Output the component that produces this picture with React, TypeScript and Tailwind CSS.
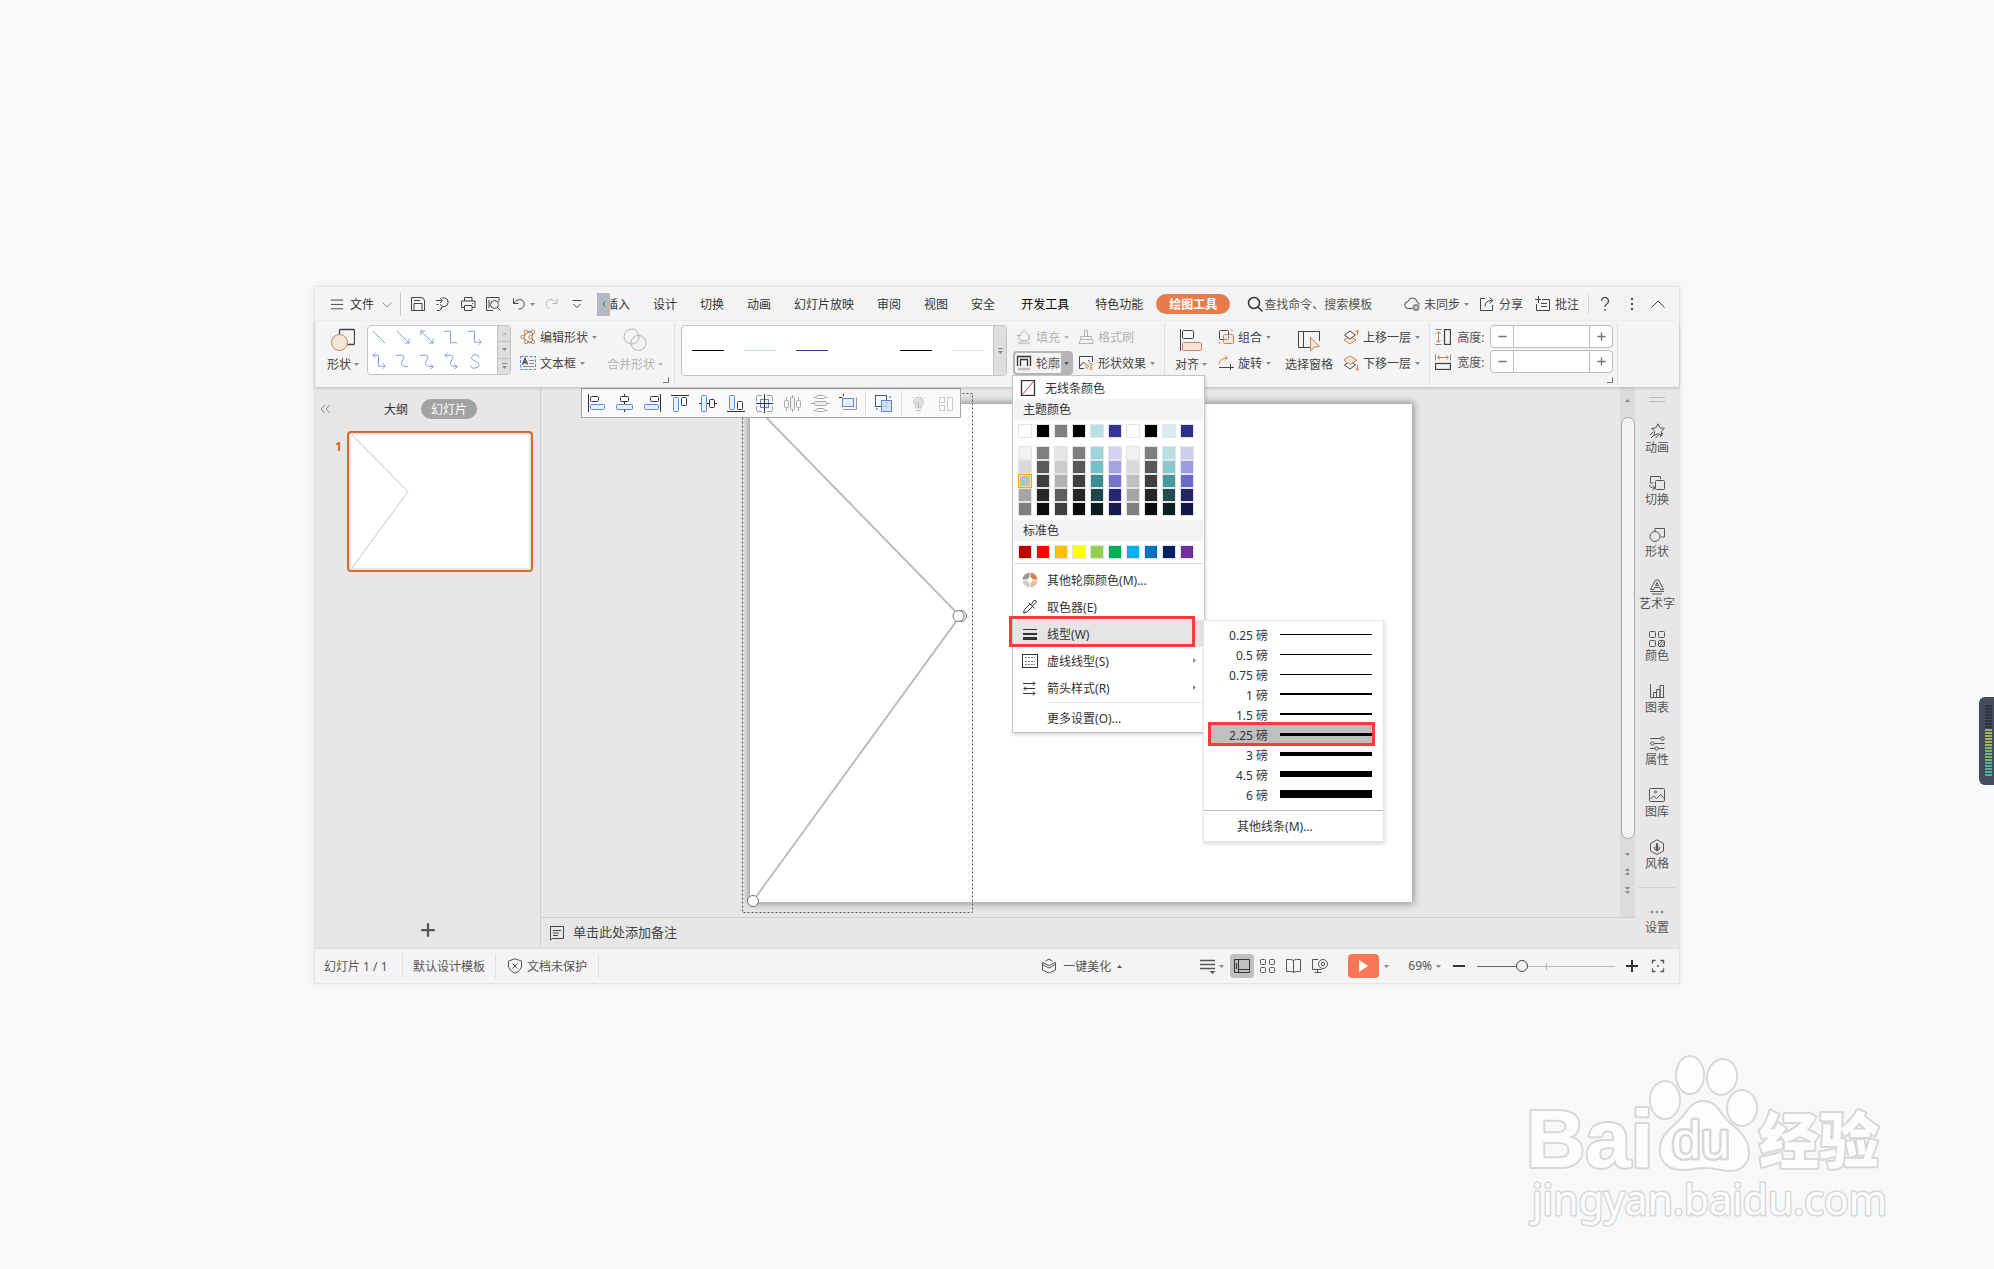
import React, { useState } from 'react';

const ORANGE = '#d08350';
const BLUE = '#5c8ad8';

// 16x16 line icons, drawn with the current text colour
const glyphs: Record<string, React.ReactNode> = {
  menu: <path d="M1 3.500h14M1 8.500h14M1 13.500h14" />,
  chevronDown: <path d="M3.500 6.500 8 11l4.500-4.500" />,
  chevronUp: <path d="M1.500 11.500 8 5l6.500 6.500" />,
  save: (
    <>
      <path d="M1.500 14.500v-13h9.500q3.500 0 3.500 3.500v9.500z" />
      <path d="M4 14.500V7.500h8v7M4 4.500h6" />
    </>
  ),
  output: (
    <>
      <path d="M3.500 8.500H1.500M1 4.500h5.500M5 2l2.500 2.500L5 7" />
      <path d="M7.500 10.500h2a4.300 4.300 0 0 0 0-8.500H7M9.500 10.500H8Q6.500 10.500 6.500 12t-2 2.500H2M5 8.500 7.500 10.500 5.500 12.500" />
    </>
  ),
  print: (
    <>
      <path d="M4.500 5V1.500h7.500V5M4 11.500H1.500v-6.500h13.500v6.500H12" />
      <path d="M4.500 9.500h7.500v5H4.500zM12 7.500h1" />
    </>
  ),
  preview: (
    <>
      <path d="M8 14.500H1.500v-13h12.500v4M4 4v8" />
      <circle cx="9.500" cy="8.500" r="4" fill="#f4f4f4" />
      <path d="m12.500 11.500 3 3" />
    </>
  ),
  undo: <path d="M3.500 2.500v5h5M3.500 7.500Q6 3.500 9.500 3.500a4.500 4.500 0 0 1 0 9.500H8.500" />,
  redo: <path d="M13 2.500v5H8M13 7.500Q10 3.500 7 3.500a4.500 4.500 0 0 0-1 9" />,
  more: <path d="M3.500 4.500h9M4.500 8l3.500 3.500L11.500 8" />,
  search: (
    <>
      <circle cx="7" cy="7" r="5.500" strokeWidth="1.500" />
      <path d="m11 11 4.500 4.500" strokeWidth="1.500" />
    </>
  ),
  cloud: (
    <>
      <path d="M8.500 12.500H4.500a3.500 3.500 0 0 1-.5-7Q5 2 8.500 2q4 0 4.500 4 2 .5 2.500 2.500" />
      <circle cx="12" cy="11.500" r="3.500" fill="#8b8b8b" stroke="none" />
      <path d="m10.700 10.200 2.600 2.600m0-2.600-2.600 2.600" stroke="#fff" />
    </>
  ),
  share: <path d="M6 2.500H1.500v12h12V9M6 10.500Q6 4.500 13 4.500M10.500 1.500l3.500 3-3.500 3" />,
  comment: <path d="M7 3.500h7.500v11h-13V8M0 3.500h6M3.500 0v7M6 7.500h6M6 10.500h6" />,
  help: (
    <>
      <path d="M4.500 5a3.500 3.500 0 1 1 5.500 2.800Q8 9 8 11" strokeWidth="1.300" />
      <path d="M8 13v1.500" strokeWidth="1.500" />
    </>
  ),
  dots: <path d="M8 2v2M8 7v2M8 12v2" strokeWidth="2" />,
  editShape: (
    <>
      <path d="m3 8 4-5h7l-3 5 3 5H7z" />
      <g fill="#f3f3f3" stroke={ORANGE}>
        <circle cx="6" cy="3" r="1.700" />
        <circle cx="13" cy="3" r="1.700" />
        <circle cx="2.500" cy="8" r="1.700" />
        <circle cx="10.500" cy="8" r="1.700" />
        <circle cx="6" cy="13" r="1.700" />
        <circle cx="13" cy="13" r="1.700" />
      </g>
    </>
  ),
  textBox: (
    <>
      <rect x=".5" y="1.500" width="15" height="13" stroke={BLUE} strokeDasharray="3 1.500" />
      <path d="m2.500 9.500 2.500-6 2.500 6M3.500 7.500h3" strokeWidth="1.300" />
      <path d="M9 5.500h5M9 8.500h5M3 11.500h11" stroke="#888" />
    </>
  ),
  fill: (
    <>
      <path d="M3 6.500 8 1.500l5 5v3l-1.500 2h-7L3 9zM1 6.500h4M13 6v5" />
      <path d="M2 14h12" strokeWidth="2.500" stroke="#d0d0d0" />
    </>
  ),
  brush: <path d="M6.500 7V1.500h3V7M2.500 7.500h11v3h-11zM2.500 10.500 1 14.500h14V10.500" />,
  outline: (
    <>
      <path d="M1.500 11V1.500h13V11M4.500 11V4.500h7V11" strokeWidth="1.300" stroke="#333" />
      <path d="M2 14h12" strokeWidth="2.500" stroke="#bfbfbf" />
    </>
  ),
  effects: (
    <>
      <path d="M6 13.500H1.500v-12h13V7M2 11l3.500-4L8 9.500M10 5.500l2 1" />
      <path d="m9 9.500 1.500 2L9 13.500l-1.500-2zM13 8l1.300 1.500L13 11l-1.300-1.500zM13 12l1.300 1.500L13 15l-1.300-1.500z" stroke={ORANGE} />
    </>
  ),
  group: (
    <>
      <rect x="1.500" y="1.500" width="9" height="9" rx="1" />
      <path d="M1.500 13v2M13 1.500h2" stroke={ORANGE} />
      <rect x="5.500" y="5.500" width="10" height="9" rx="1" stroke={ORANGE} fill="#f3d9cb" fillOpacity=".5" />
    </>
  ),
  rotate: (
    <>
      <path d="M1 12.500h9M12.500 9v6M10 12.500h6" />
      <path d="M1 9q1-6 8-6M7 .5 9.500 3 7 5.500" stroke={ORANGE} />
    </>
  ),
  layerUp: (
    <>
      <path d="m1 11 6-3.500 6 3.500-6 4z" stroke={ORANGE} fill="#fbe6da" />
      <path d="m1.500 6 5.500-4 5.500 4L7 10z" fill="#f3f3f3" />
      <path d="M14.500 6V1M12.500 3l2-2 1.500 2" stroke={ORANGE} />
    </>
  ),
  layerDown: (
    <>
      <path d="m1.500 10 5.500-4 5.500 4L7 14z" />
      <path d="m1 5 6-4 7 4-7 4.500z" stroke={ORANGE} fill="#fbe6da" />
      <path d="M14.500 10v5.500M12.500 13.500l2 2 1.500-2" stroke={ORANGE} />
    </>
  ),
  height: (
    <>
      <rect x="9.500" y=".5" width="6" height="15" strokeWidth="1.300" />
      <path d="M.5.500h6M.5 15.500h6" stroke="#888" />
      <path d="M3.500 3v10M1.500 5l2-2.500 2 2.500M1.500 11l2 2.500 2-2.500" stroke={ORANGE} />
    </>
  ),
  width: (
    <>
      <rect x=".5" y="9.500" width="15" height="6" strokeWidth="1.300" />
      <path d="M.5.500v6M15.500.500v6" stroke="#888" />
      <path d="M3 3.500h10M5 1.500 2.500 3.500 5 5.500M11 1.500l2.500 2L11 5.500" stroke={ORANGE} />
    </>
  ),
  noLine: (
    <>
      <rect x="1.500" y=".5" width="13" height="15" strokeWidth="1.300" />
      <path d="m2.500 14.500 11-13" stroke="#e03030" />
    </>
  ),
  wheel: (
    <g stroke="none">
      <path d="M8.500.500a7.500 7.500 0 0 1 7 7H11L8.500 5z" fill={ORANGE} />
      <path d="M15.500 8.500a7.500 7.500 0 0 1-7 7V11L11 8.500z" fill="#e6bb9f" />
      <path d="M7.500 15.500a7.500 7.500 0 0 1-7-7H5L7.500 11z" fill="#cfcfcf" />
      <path d="M.5 7.500a7.500 7.500 0 0 1 7-7V5L5 7.500z" fill="#999" />
    </g>
  ),
  dropper: <path d="M8 5 2.500 10.500 1.500 14l3.500-1L10.500 7.500M6.500 3.500l6 6M9 5.500l3-4q2-1 2.500 1.500l-4 4" />,
  weight: (
    <>
      <path d="M1 3.500h14" />
      <path d="M1 8h14" strokeWidth="2" />
      <path d="M1 12.500h14" strokeWidth="3" />
    </>
  ),
  dash: (
    <>
      <rect x=".5" y="1.500" width="15" height="13" />
      <path d="M3 4.500h10M3 8.500h10M3 11.500h10" strokeDasharray="2 1" stroke="#777" />
    </>
  ),
  arrows: <path d="M1 3.500h12M11 1.500l2 2-2 2M13 8.500H2M4 6.500l-2 2 2 2M1 13.500h12M11 11.500l2 2-2 2" />,
  anim: (
    <>
      <path d="m9 .8 2 4 4.300.6-3 3 .7 4.300L9 10.700 5 12.600l.7-4.200-3-3 4.300-.6z" />
      <path d="m4 9-3 3M5 12l-3 3M10 11.500 6.500 15M14 10l-3 4" />
    </>
  ),
  swap: (
    <>
      <path d="M4.500 8H1.500V1.500h10V4" />
      <rect x="6.500" y="5.500" width="9" height="9" rx="1" />
      <path d="M.5 10q0 3 5 3M4 10.500 6 13l-2.500 2" />
    </>
  ),
  shape: (
    <>
      <path d="M6 4V1.500h9.500v8.500H12" />
      <circle cx="6" cy="9.500" r="5" />
    </>
  ),
  wordArt: (
    <>
      <path d="M1.500 10.500 6.500 1h3l5 9.500h-3l-1-2h-5l-1 2zM6.500 6.500 8 3.500l1.500 3z" />
      <path d="M1 12.500h14M3 15h10" />
    </>
  ),
  palette: (
    <>
      <rect x=".5" y=".5" width="6" height="6" rx="1" />
      <rect x="9.500" y=".5" width="6" height="6" rx="1" />
      <rect x=".5" y="9.500" width="6" height="6" rx="1" />
      <rect x="9.500" y="9.500" width="6" height="6" rx="1" />
      <path d="m10 13 3.500-3.500M10.500 15.500 15.500 10M13 15.500l2.500-2.500" />
    </>
  ),
  chart: <path d="M1.500 1v13.500H15.500M4.500 14V9.500h3V14M7.500 14V6.500h3.500V14M11 14V2.500h3.500V14" />,
  sliders: (
    <>
      <path d="M1 3.500h11M5 8.500h10.500M1 8.500h1M1 13.500h5M9 13.500h6.500" />
      <circle cx="13.500" cy="3.500" r="1.700" />
      <circle cx="3.500" cy="8.500" r="1.700" />
      <circle cx="7.500" cy="13.500" r="1.700" />
    </>
  ),
  image: (
    <>
      <rect x=".5" y="1.500" width="15" height="13" rx="1" />
      <circle cx="6.500" cy="5" r="1" />
      <path d="m1.500 12 3-3 3 2.500 4-4 3.500 4" />
    </>
  ),
  style: (
    <>
      <path d="M8 .8 14.500 4.500v7.500L8 15.500 1.500 12V4.500z" />
      <path d="M8 4q2 3.500 0 7.500-2-4 0-7.500zM5 8q.5 3 3 4M11 8q-.5 3-3 4" fill="currentColor" />
    </>
  ),
  note: <path d="M1.500 15V1.500h13v12H3.500zM4 5.500h8M4 8h6M4 10.500h5" />,
  shield: <path d="M8 .8 14.500 3v6q-1 4-6.500 6.300Q2.500 13 1.500 9V3zM5.500 5.500l5 5m0-5-5 5" />,
  beautify: <path d="M8 7.500 1.500 4.500v7.500L8 15l6.500-3V4.500zM4.500 3 8 1l3.500 2M1.500 6.500 8 10l6.500-3.500" />,
  lines: (
    <>
      <path d="M0 2.500h15M0 6.500h15M0 10.500h15" strokeWidth="1.300" />
      <path d="M9.500 13h6l-3 3z" fill="currentColor" stroke="none" />
    </>
  ),
  normal: <path d="M.5 1.500h15v13H.5zM4.500 1.500v13M4.500 11.500h11M2.500 5v6" />,
  sorter: (
    <>
      <rect x=".5" y="1.500" width="5" height="5" rx="1" />
      <rect x="9.500" y="1.500" width="5" height="5" rx="1" />
      <rect x=".5" y="9.500" width="5" height="5" rx="1" />
      <rect x="9.500" y="9.500" width="5" height="5" rx="1" />
    </>
  ),
  book: <path d="M7.500 2.500v12M7.500 2.500Q6 1.500 4.500 1.500h-4v12h4q2 0 3 1 1-1 3-1h4v-12h-4q-2 0-3 1" />,
  projector: (
    <>
      <path d="M6 1.500H.5v10h9M5.500 11.500v3M2.500 14.500h7" />
      <circle cx="11" cy="6" r="4.500" />
      <circle cx="11" cy="6" r="1.700" />
    </>
  ),
  fit: (
    <>
      <path d="M2.500 5.500v-3h3M10.500 2.500h3v3M13.500 10.500v3h-3M5.500 13.500h-3v-3" strokeWidth="1.300" />
      <circle cx="8" cy="8" r="1" fill="currentColor" stroke="none" />
    </>
  ),
  plus: <path d="M2 8h12M8 2v12" strokeWidth="2" />,
  minus: <path d="M2 8h12" strokeWidth="2" />,
  collapse: <path d="M7 4 3 8l4 4M12 4 8 8l4 4" />,
};

function Icon({ name, className = 'size-4' }: { name: string; className?: string }) {
  return (
    <svg viewBox="0 0 16 16" fill="none" stroke="currentColor" className={`shrink-0 ${className}`} aria-hidden="true">
      {glyphs[name]}
    </svg>
  );
}

function Caret({ up = false, className = 'text-[#888]' }: { up?: boolean; className?: string }) {
  return (
    <svg viewBox="0 0 5 3" className={`h-[3px] w-[5px] shrink-0 ${className}`} aria-hidden="true">
      <path d={up ? 'M0 3h5L2.500 0z' : 'M0 0h5L2.500 3z'} fill="currentColor" />
    </svg>
  );
}

// CJK glyphs sit high in the line box, the padding centres them on the icons
const Label = ({ children }: { children: React.ReactNode }) => <span className="whitespace-nowrap pt-[2px]">{children}</span>;

function Tool({ icon, label, caret = true, muted = false }: { icon: string; label: string; caret?: boolean; muted?: boolean }) {
  return (
    <button disabled={muted} className={`flex h-6 items-center gap-1 ${muted ? 'text-[#b4b4b4]' : 'text-[#444]'}`}>
      <Icon name={icon} />
      <Label>{label}</Label>
      {caret && <Caret className={muted ? 'text-[#b4b4b4]' : 'text-[#888]'} />}
    </button>
  );
}

function BigTool({ label, caret = true, muted = false, children }: { label: string; caret?: boolean; muted?: boolean; children: React.ReactNode }) {
  return (
    <button disabled={muted} className={`flex h-[50px] shrink-0 flex-col items-center gap-[3px] pt-[3px] ${muted ? 'text-[#b4b4b4]' : 'text-[#444]'}`}>
      <svg viewBox="0 0 24 24" fill="none" stroke="currentColor" className="size-6" aria-hidden="true">
        {children}
      </svg>
      <span className="flex items-center gap-[3px]">
        <Label>{label}</Label>
        {caret && <Caret className={muted ? 'text-[#b4b4b4]' : 'text-[#888]'} />}
      </span>
    </button>
  );
}

const Divider = () => <span className="my-[2px] w-px shrink-0 self-stretch bg-[#dfdfdf]" />;

const Launcher = () => (
  <svg viewBox="0 0 6 6" className="mt-[2px] size-[6px] self-end" aria-hidden="true">
    <path d="M5.500 0v5.500H0" fill="none" stroke="#777" />
  </svg>
);

const lineShapes = [
  'M1 1 15 15',
  'M1 1 15 15M15 10v5h-5',
  'M1 1 15 15M15 10v5h-5M1 6V1h5',
  'M0 1.500h7.500v13H15',
  'M0 1.500h7.500v12.500H15M12 10.500l3 3.500-3 3',
  'M1 1.500h6.500v12.500H15M12 10.500l3 3.500-3 3M4-1.500l-3 3 3 3',
  'M0 1.500h6q5 0 2 5t-1 6q1 2 7 2',
  'M0 1.500h6q5 0 2 5t-1 6q1 2 8 2M12 11.500l3 3-3 3',
  'M1 1.500h6q5 0 2 5t-1 6q1 2 7 2M12 11.500l3 3-3 3M4-1.500l-3 3 3 3',
  'M13 4Q12 .5 8.500.500T4 4q0 3 4 4t4.500 4-4 4T3 13',
];

const themeTop = ['#ffffff', '#000000', '#808080', '#000000', '#b9e1e3', '#333399', '#ffffff', '#000000', '#d9edee', '#2d2d8a'];

const themeShades = [
  ['#f2f2f2', '#7f7f7f', '#e5e5e5', '#7f7f7f', '#9fd5d8', '#d1d1f0', '#f2f2f2', '#7f7f7f', '#b9dfe0', '#cdcdee'],
  ['#d9d9d9', '#595959', '#cccccc', '#595959', '#74c1c6', '#a3a3e0', '#d9d9d9', '#595959', '#8bc8cb', '#9b9bdd'],
  ['#bfbfbf', '#3f3f3f', '#b2b2b2', '#3f3f3f', '#3d8c91', '#7575d1', '#bfbfbf', '#3f3f3f', '#47999d', '#6a6acc'],
  ['#a6a6a6', '#262626', '#5f5f5f', '#262626', '#1e4648', '#262673', '#a6a6a6', '#262626', '#244d4f', '#222267'],
  ['#7f7f7f', '#0c0c0c', '#3f3f3f', '#0c0c0c', '#0c1c1d', '#19194c', '#7f7f7f', '#0c0c0c', '#0e1f20', '#161645'],
];

const standardColors = ['#c00000', '#ff0000', '#ffc000', '#ffff00', '#92d050', '#00b050', '#00b0f0', '#0070c0', '#002060', '#7030a0'];

const weights = [
  { label: '0.25 磅', size: 1 },
  { label: '0.5 磅', size: 1 },
  { label: '0.75 磅', size: 1 },
  { label: '1 磅', size: 2 },
  { label: '1.5 磅', size: 2 },
  { label: '2.25 磅', size: 3 },
  { label: '3 磅', size: 4 },
  { label: '4.5 磅', size: 6 },
  { label: '6 磅', size: 8 },
];

function Swatches({ colors, picked = false }: { colors: string[]; picked?: boolean }) {
  return (
    <div className="flex gap-1 pl-[5px]">
      {colors.map((c, i) => (
        <button
          key={i}
          aria-label={c}
          className={`size-[14px] border ${picked && i === 0 ? 'border-[#ffa500] outline outline-1 -outline-offset-2 outline-[#ffe3a0]' : 'border-[#e2e4e9]'}`}
          style={{ backgroundColor: c }}
        />
      ))}
    </div>
  );
}

function MenuItem({ icon, label, arrow = false }: { icon: string; label: string; arrow?: boolean }) {
  return (
    <button className="flex h-[27px] w-full items-center gap-[9px] pl-[9px] pr-2 text-left">
      <Icon name={icon} />
      <Label>{label}</Label>
      {arrow && (
        <svg viewBox="0 0 3 5" className="ml-auto h-[5px] w-[3px]" aria-hidden="true">
          <path d="M0 0v5l3-2.500z" fill="#888" />
        </svg>
      )}
    </button>
  );
}

function WeightMenu() {
  const [current, setCurrent] = useState('2.25 磅');
  return (
    <div className="absolute left-[190px] top-0 w-[181px] border border-[#e6e6e6] bg-white pt-[3px] shadow-[1px_2px_4px_rgba(0,0,0,0.15)]">
      {weights.map((w) => (
        <button key={w.label} onClick={() => setCurrent(w.label)} className="relative flex h-5 w-full items-center">
          {current === w.label && (
            <span className="absolute -top-[2px] left-1 h-6 w-[167px] border-[3px] border-[#ff3a3a] bg-[#bfbfbf]" />
          )}
          <span className="relative w-16 pt-[3px] text-right">{w.label}</span>
          <span className="relative ml-3 w-[92px] bg-black" style={{ height: w.size }} />
        </button>
      ))}
      <div className="mt-[6px] border-t border-[#bdbdbd]">
        <button className="h-[30px] pl-[33px] pt-[2px]">其他线条(M)...</button>
      </div>
    </div>
  );
}

function OutlineMenu() {
  return (
    <div className="absolute -left-px top-6 z-20 w-[193px] border border-[#c6c6c6] bg-white text-[#333] shadow-[1px_2px_3px_rgba(0,0,0,0.15)]">
      <button className="flex h-[23px] items-center gap-[9px] pl-[7px] pt-px">
        <Icon name="noLine" />
        <Label>无线条颜色</Label>
      </button>
      <div className="mx-px h-[21px] bg-[#f3f3f3] pl-[9px] pt-[3px]">主题颜色</div>
      <div className="pt-1">
        <Swatches colors={themeTop} />
      </div>
      <div className="pb-1 pt-2">
        {themeShades.map((row, i) => (
          <Swatches key={i} colors={row} picked={i === 2} />
        ))}
      </div>
      <div className="mx-px h-[21px] bg-[#f3f3f3] pl-[9px] pt-[3px]">标准色</div>
      <div className="py-1">
        <Swatches colors={standardColors} />
      </div>
      <div className="mx-px border-t border-[#dcdcdc] pt-[2px]" />
      <MenuItem icon="wheel" label="其他轮廓颜色(M)..." />
      <MenuItem icon="dropper" label="取色器(E)" />
      <div className="relative bg-[#e5e5e5]">
        <MenuItem icon="weight" label="线型(W)" />
        <WeightMenu />
        <span className="pointer-events-none absolute -left-1 -top-1 h-[31px] w-[186px] border-[3px] border-[#ff3a3a]" />
      </div>
      <MenuItem icon="dash" label="虚线线型(S)" arrow />
      <MenuItem icon="arrows" label="箭头样式(R)" arrow />
      <div className="ml-[34px] mt-px border-t border-[#e6e6e6]" />
      <button className="h-[29px] pl-[34px] pt-[2px]">更多设置(O)...</button>
    </div>
  );
}

function TitleBar() {
  return (
    <header className="flex h-[34px] items-center pl-[15px] pr-[13px] text-[#333]">
      <button className="flex shrink-0 items-center">
        <Icon name="menu" className="size-[14px]" />
        <span className="ml-[6px] pt-[2px]">文件</span>
        <Icon name="chevronDown" className="ml-[5px] size-4 text-[#888]" />
      </button>
      <span className="ml-[5px] h-6 w-px bg-[#c8c8c8]" />
      <div className="ml-[9px] flex items-center gap-[9px] text-[#444]">
        {['save', 'output', 'print', 'preview'].map((n) => (
          <button key={n} aria-label={n}>
            <Icon name={n} />
          </button>
        ))}
        <button aria-label="undo" className="flex items-center gap-1">
          <Icon name="undo" />
          <Caret />
        </button>
        <button aria-label="redo" className="text-[#bbb]">
          <Icon name="redo" />
        </button>
        <button aria-label="more">
          <Icon name="more" />
        </button>
      </div>
      <button aria-label="scroll tabs" className="ml-3 flex h-[23px] w-[13px] items-center justify-center bg-[#b6b9c2]">
        <svg viewBox="0 0 4 6" className="h-[6px] w-1" aria-hidden="true">
          <path d="M3.500.500 1 3l2.500 2.500" fill="none" stroke="#555" />
        </svg>
      </button>
      <nav className="flex shrink-0 items-center gap-[23px] pt-[2px]">
        <button className="flex w-5 justify-end overflow-hidden whitespace-nowrap">插入</button>
        {['设计', '切换', '动画', '幻灯片放映', '审阅', '视图', '安全'].map((t) => (
          <button key={t}>{t}</button>
        ))}
      </nav>
      <nav className="ml-[26px] flex shrink-0 items-center">
        <button className="pt-[2px] text-black">开发工具</button>
        <button className="ml-[26px] pt-[2px]">特色功能</button>
        <button className="ml-[13px] h-5 rounded-full bg-[#e87b4b] px-[13px] pt-px font-bold text-white">绘图工具</button>
      </nav>
      <label className="ml-[17px] flex min-w-0 items-center gap-px">
        <Icon name="search" />
        <input aria-label="搜索" placeholder="查找命令、搜索模板" className="w-[112px] bg-transparent pt-[2px] outline-none placeholder:text-[#555]" />
      </label>
      <div className="ml-auto flex shrink-0 items-center text-[#444]">
        <button className="flex items-center gap-1">
          <Icon name="cloud" />
          <Label>未同步</Label>
          <Caret />
        </button>
        <button className="ml-[10px] flex items-center gap-1">
          <Icon name="share" />
          <Label>分享</Label>
        </button>
        <button className="ml-3 flex items-center gap-1">
          <Icon name="comment" />
          <Label>批注</Label>
        </button>
        <span className="ml-[9px] h-5 w-px bg-[#d8d8d8]" />
        <button aria-label="help" className="ml-2">
          <Icon name="help" />
        </button>
        <button aria-label="options" className="ml-[11px]">
          <Icon name="dots" />
        </button>
        <button aria-label="collapse" className="ml-[10px]">
          <Icon name="chevronUp" />
        </button>
      </div>
    </header>
  );
}

function Stepper({ id, icon, label }: { id: string; icon: string; label: string }) {
  return (
    <div className="flex items-center">
      <Icon name={icon} />
      <label htmlFor={id} className="ml-[6px] w-[33px] pt-[2px] text-[#555]">
        {label}
      </label>
      <div className="flex h-[23px] w-[123px] overflow-hidden rounded border border-[#bdbdbd] bg-white text-[#777]">
        <button aria-label="minus" className="flex w-[22px] items-center justify-center">
          <Icon name="minus" className="size-[11px]" />
        </button>
        <input id={id} className="w-0 flex-1 border-x border-[#bdbdbd] outline-none" />
        <button aria-label="plus" className="flex w-[22px] items-center justify-center">
          <Icon name="plus" className="size-[11px]" />
        </button>
      </div>
    </div>
  );
}

function Ribbon() {
  return (
    <div className="relative z-10 flex h-[66px] items-start pl-3 shadow-[0_1px_3px_rgba(0,0,0,0.2)]">
      <div className="mt-1 flex flex-col pr-[5px]">
        <div className="flex pr-[6px]">
          <BigTool label="形状">
            <rect x="8.500" y="1.500" width="15" height="15" rx="1" strokeWidth="1.300" />
            <circle cx="8.500" cy="14.500" r="8" stroke={ORANGE} fill="#f5e4da" />
          </BigTool>
          <div className="ml-2 flex h-[50px] w-36 overflow-hidden rounded border border-[#c4c4c4] bg-white">
            <div className="grid flex-1 grid-cols-[repeat(5,14px)] content-start gap-[10px] p-1">
              {lineShapes.map((d) => (
                <button key={d} aria-label="line">
                  <svg viewBox="0 0 16 16" fill="none" stroke="#6f94d6" className="size-[14px] overflow-visible" aria-hidden="true">
                    <path d={d} />
                  </svg>
                </button>
              ))}
            </div>
            <div className="flex w-[13px] flex-col divide-y divide-[#c4c4c4] border-l border-[#c4c4c4] bg-[#dedede]">
              <button aria-label="up" className="flex flex-1 items-center justify-center">
                <Caret up className="text-[#bbb]" />
              </button>
              <button aria-label="down" className="flex flex-1 items-center justify-center">
                <Caret />
              </button>
              <button aria-label="expand" className="flex flex-1 flex-col items-center justify-center gap-[2px]">
                <span className="h-px w-[5px] bg-[#888]" />
                <Caret />
              </button>
            </div>
          </div>
          <div className="ml-[9px] flex flex-col gap-[2px]">
            <Tool icon="editShape" label="编辑形状" />
            <Tool icon="textBox" label="文本框" />
          </div>
          <div className="ml-[10px]">
            <BigTool label="合并形状" muted>
              <circle cx="8.500" cy="8.500" r="7.500" />
              <circle cx="15.500" cy="15" r="7.500" />
            </BigTool>
          </div>
        </div>
        <Launcher />
      </div>
      <Divider />
      <div className="ml-[6px] mt-1 flex h-[51px] w-[326px] overflow-hidden rounded border border-[#c4c4c4] bg-white">
        <div className="flex flex-1 items-center gap-5 pl-[10px]">
          {['#000000', '#b9dfe0', '#333399', '#ffffff', '#000000', '#dbebe9'].map((c, i) => (
            <button key={i} aria-label="preset" className="h-px w-8" style={{ backgroundColor: c }} />
          ))}
        </div>
        <button aria-label="expand" className="flex w-[13px] flex-col items-center justify-center gap-[2px] border-l border-[#c4c4c4] bg-[#dedede]">
          <span className="h-px w-[5px] bg-[#888]" />
          <Caret />
        </button>
      </div>
      <div className="ml-[6px] mt-1 flex flex-col gap-[2px]">
        <div className="pl-[3px]">
          <Tool icon="fill" label="填充" muted />
        </div>
        <div className="relative">
          <button className="flex h-6 w-[60px] items-center rounded border-2 border-[#b5b5b5] pl-px text-[#555]">
            <Icon name="outline" />
            <span className="ml-1 pt-[2px]">轮廓</span>
            <span className="ml-px flex h-full flex-1 items-center justify-center bg-[#b5b5b5]">
              <Caret className="text-[#555]" />
            </span>
          </button>
          <OutlineMenu />
        </div>
      </div>
      <div className="ml-[5px] mr-[9px] mt-1 flex flex-col gap-[2px]">
        <Tool icon="brush" label="格式刷" caret={false} muted />
        <Tool icon="effects" label="形状效果" />
      </div>
      <Divider />
      <div className="ml-[10px] mr-[9px] mt-1 flex">
        <BigTool label="对齐">
          <path d="M1.500 1v22" />
          <rect x="3.500" y="2.500" width="11" height="8" rx="1" />
          <rect x="3.500" y="14.500" width="19" height="8" rx="1" stroke={ORANGE} fill="#f5e4da" />
        </BigTool>
        <div className="ml-[11px] flex flex-col gap-[2px]">
          <Tool icon="group" label="组合" />
          <Tool icon="rotate" label="旋转" />
        </div>
        <div className="ml-[14px]">
          <BigTool label="选择窗格" caret={false}>
            <path d="M13 19.500H1.500v-16h21V13M6.500 3.500v16" />
            <path d="m13.500 9.500 9 9-5 .5-4 4z" stroke={ORANGE} fill="#f5e4da" />
          </BigTool>
        </div>
        <div className="ml-[10px] flex flex-col gap-[2px]">
          <Tool icon="layerUp" label="上移一层" />
          <Tool icon="layerDown" label="下移一层" />
        </div>
      </div>
      <Divider />
      <div className="ml-[5px] mr-1 mt-1 flex flex-col gap-[2px] text-[#444]">
        <Stepper id="shape-height" icon="height" label="高度:" />
        <Stepper id="shape-width" icon="width" label="宽度:" />
        <Launcher />
      </div>
      <Divider />
    </div>
  );
}

function SlidePane() {
  return (
    <aside className="flex w-[226px] shrink-0 flex-col border-r border-[#d0d0d0] pt-3">
      <div className="flex items-center">
        <button aria-label="collapse pane" className="ml-[3px] text-[#888]">
          <Icon name="collapse" />
        </button>
        <button className="ml-[50px] pt-px text-[#333]">大纲</button>
        <button className="ml-[13px] h-5 rounded-full bg-[#a2a2a2] px-[10px] pt-px text-white">幻灯片</button>
      </div>
      <div className="mt-3 flex pl-5 text-[#d9631e]">
        <span className="w-3 pt-2 font-bold">1</span>
        <button aria-label="slide 1" className="rounded border-2 border-[#d86a2c] p-[2px]">
          <svg viewBox="0 0 178 133" className="h-[133px] w-[178px] bg-white" aria-hidden="true">
            <path d="M1 0 57 56.500 1 133" fill="none" stroke="#c6c6c6" />
          </svg>
        </button>
      </div>
      <button aria-label="add slide" className="mb-[9px] mt-auto self-center text-[#555]">
        <Icon name="plus" className="size-[18px]" />
      </button>
    </aside>
  );
}

// 19x20 drawings for the floating align bar
const alignIcons: React.ReactNode[] = [
  <g key="l"><path d="M1.500 1v18" /><rect x="3.500" y="3.500" width="8" height="5" rx="1" /><rect x="3.500" y="11.500" width="14" height="5" rx="1" stroke={BLUE} fill="#e8f0fb" /></g>,
  <g key="c"><path d="M9.500 1v18" /><rect x="5.500" y="3.500" width="8" height="5" rx="1" fill="#fafafa" /><rect x="1.500" y="11.500" width="16" height="5" rx="1" stroke={BLUE} fill="#e8f0fb" /></g>,
  <g key="r"><path d="M17.500 1v18" /><rect x="7.500" y="3.500" width="8" height="5" rx="1" /><rect x="1.500" y="11.500" width="14" height="5" rx="1" stroke={BLUE} fill="#e8f0fb" /></g>,
  <g key="t"><path d="M0 2.500h18" /><rect x="10.500" y="4.500" width="5" height="8" rx="1" /><rect x="2.500" y="4.500" width="5" height="14" rx="1" stroke={BLUE} fill="#e8f0fb" /></g>,
  <g key="m"><path d="M0 10.500h18" /><rect x="10.500" y="6.500" width="5" height="8" rx="1" fill="#fafafa" /><rect x="2.500" y="2.500" width="5" height="16" rx="1" stroke={BLUE} fill="#e8f0fb" /></g>,
  <g key="b"><path d="M0 18.500h18" /><rect x="10.500" y="8.500" width="5" height="8" rx="1" /><rect x="2.500" y="2.500" width="5" height="14" rx="1" stroke={BLUE} fill="#e8f0fb" /></g>,
  <g key="x"><path d="M7 2.500H3.500q-2 0-2 2V8M12 2.500h3.500q2 0 2 2V8M7 18.500H3.500q-2 0-2-2V13M12 18.500h3.500q2 0 2-2V13" stroke="#999" /><rect x="5.500" y="6.500" width="8" height="8" stroke={BLUE} fill="#e8f0fb" /><path d="M1 10.500h17M9.500 1v19" /></g>,
  <g key="h" stroke="#aaa"><rect x="1.500" y="7.500" width="4" height="7" rx="1" /><rect x="7.500" y="4.500" width="4" height="12" rx="1" fill="#eee" /><rect x="13.500" y="7.500" width="4" height="7" rx="1" /><path d="M3.500 4v3M3.500 15v3M15.500 4v3M15.500 15v3M9.500 2v2M9.500 17v2" /></g>,
  <g key="v" stroke="#aaa"><rect x="5.500" y="2.500" width="8" height="3" rx="1" /><rect x="3.500" y="8.500" width="12" height="4" rx="1" fill="#eee" /><rect x="5.500" y="15.500" width="8" height="3" rx="1" /><path d="M2 4.500h3M14 4.500h3M0 10.500h3M16 10.500h3M2 17.500h3M14 17.500h3" /></g>,
  <g key="s"><path d="M0 4.500h3M4.500 1v2" /><path d="M4 16.500h13.500v-12" stroke="#999" /><rect x="3.500" y="5.500" width="11" height="8" stroke={BLUE} fill="#e8f0fb" /></g>,
];

function AlignBar() {
  return (
    <div className="absolute -left-[169px] -top-4 flex h-[30px] w-[380px] items-center border border-[#a5a5a5] bg-[#fafafa] pl-[5px] text-[#333]">
      {alignIcons.map((g, i) => (
        <button key={i} aria-label="align" className="mr-[9px]">
          <svg viewBox="0 0 19 20" fill="none" stroke="currentColor" className="h-5 w-[19px]" aria-hidden="true">
            {g}
          </svg>
        </button>
      ))}
      <span className="-ml-[2px] h-6 w-px bg-[#dcdcdc]" />
      <button aria-label="group" className="mx-2">
        <svg viewBox="0 0 19 20" fill="none" className="h-5 w-[19px]" aria-hidden="true">
          <rect x="1.500" y="2.500" width="11" height="11" stroke="#555" />
          <rect x="7.500" y="7.500" width="10" height="11" stroke={BLUE} fill="#c9dcf6" fillOpacity=".8" />
          <path d="M2 16h2M15 4h2" stroke="#8ab0e8" strokeWidth="2" />
        </svg>
      </button>
      <span className="h-6 w-px bg-[#dcdcdc]" />
      <button disabled aria-label="idea" className="ml-[7px]">
        <svg viewBox="0 0 19 20" fill="none" className="h-5 w-[19px]" aria-hidden="true">
          <path d="M9.500 4a5 5 0 0 1 3 9v2h-6v-2a5 5 0 0 1 3-9z" fill="#ddd" stroke="#ccc" />
          <path d="M7 17.500h5M9.500 15V9M3 4l1 1M16 4l-1 1M9.500 1v1" stroke="#bbb" />
        </svg>
      </button>
      <button disabled aria-label="layout" className="ml-[9px]">
        <svg viewBox="0 0 19 20" fill="none" stroke="#ccc" className="h-5 w-[19px]" aria-hidden="true">
          <rect x="2.500" y="4.500" width="5" height="5" />
          <rect x="2.500" y="12.500" width="5" height="5" />
          <rect x="10.500" y="4.500" width="5" height="13" />
        </svg>
      </button>
    </div>
  );
}

function Canvas() {
  return (
    <div className="flex-1 overflow-hidden pb-[15px] pt-[17px]">
      <div className="relative mx-auto h-[498px] w-[662px] bg-white shadow-[0_0_7px_2px_rgba(0,0,0,0.35)]">
        <svg viewBox="0 0 662 498" fill="none" className="absolute inset-0 size-full overflow-visible" aria-hidden="true">
          <rect x="-7.500" y="-10.500" width="230" height="519" stroke="#555" strokeDasharray="2 2" />
          <path d="M3 0 210 212 3 497" stroke="#bdbdbd" strokeWidth="2" />
          <g fill="#fff" stroke="#777">
            <circle cx="211" cy="212" r="5.500" />
            <circle cx="208.500" cy="212" r="5.500" />
            <circle cx="3" cy="497" r="5.500" />
          </g>
        </svg>
        <AlignBar />
      </div>
    </div>
  );
}

function ScrollBar() {
  return (
    <div className="flex w-[15px] shrink-0 flex-col items-center bg-[#dcdcdc] pt-3">
      <Caret up />
      <div className="mt-[15px] h-[422px] w-[14px] rounded-full border border-[#aaa] bg-[#f4f4f4]" />
      <div className="mt-[14px] flex flex-col items-center gap-3">
        <Caret />
        <div className="flex flex-col gap-px">
          <Caret up />
          <Caret up />
        </div>
        <div className="flex flex-col gap-px">
          <Caret />
          <Caret />
        </div>
      </div>
    </div>
  );
}

const sideItems = [
  { icon: 'anim', label: '动画' },
  { icon: 'swap', label: '切换' },
  { icon: 'shape', label: '形状' },
  { icon: 'wordArt', label: '艺术字' },
  { icon: 'palette', label: '颜色' },
  { icon: 'chart', label: '图表' },
  { icon: 'sliders', label: '属性' },
  { icon: 'image', label: '图库' },
  { icon: 'style', label: '风格' },
];

function SideBar() {
  return (
    <aside className="flex w-11 shrink-0 flex-col items-center pt-[10px] text-[#555]">
      <span className="h-[5px] w-4 border-y border-[#bbb]" />
      <div className="mt-[21px] flex flex-col gap-[19px]">
        {sideItems.map((s) => (
          <button key={s.icon} className="flex flex-col items-center gap-px">
            <Icon name={s.icon} />
            {s.label}
          </button>
        ))}
      </div>
      <span className="mt-[15px] h-px w-[38px] bg-[#d3d3d3]" />
      <button className="mt-[22px] flex flex-col items-center gap-[6px]">
        <svg viewBox="0 0 14 4" fill="none" stroke="#777" className="h-1 w-[14px]" aria-hidden="true">
          <circle cx="2" cy="2" r="1" />
          <circle cx="7" cy="2" r="1" />
          <circle cx="12" cy="2" r="1" />
        </svg>
        设置
      </button>
    </aside>
  );
}

function StatusBar() {
  return (
    <footer className="flex h-[35px] items-center border-t border-[#e0e0e0] pl-[9px] pr-[13px] text-[#555]">
      <span className="w-[78px] pt-px">幻灯片 1 / 1</span>
      <span className="h-6 w-px bg-[#dfdfdf]" />
      <span className="px-[10px] pt-px">默认设计模板</span>
      <span className="h-6 w-px bg-[#dfdfdf]" />
      <button className="flex items-center gap-1 px-[11px]">
        <Icon name="shield" />
        <Label>文档未保护</Label>
      </button>
      <span className="h-6 w-px bg-[#dfdfdf]" />
      <div className="ml-auto flex items-center">
        <button className="mr-[78px] flex items-center gap-[6px]">
          <Icon name="beautify" />
          <Label>一键美化</Label>
          <Caret up className="text-[#555]" />
        </button>
        <button aria-label="notes" className="flex items-center gap-[3px]">
          <Icon name="lines" />
          <Caret />
        </button>
        <button aria-label="normal view" className="ml-[6px] flex h-6 w-6 items-center justify-center rounded bg-[#bfbfbf] text-[#333]">
          <Icon name="normal" />
        </button>
        <div className="ml-[6px] flex gap-[10px]">
          <button aria-label="slide sorter"><Icon name="sorter" /></button>
          <button aria-label="reading view"><Icon name="book" /></button>
          <button aria-label="presenter"><Icon name="projector" /></button>
        </div>
        <button aria-label="play" className="ml-5 flex h-6 w-[31px] items-center justify-center rounded bg-[#fb7757]">
          <svg viewBox="0 0 9 12" className="h-3 w-[9px]" aria-hidden="true">
            <path d="M0 0v12l9-6z" fill="#fff" />
          </svg>
        </button>
        <span className="ml-[5px] flex"><Caret /></span>
        <button className="ml-[19px] flex items-center gap-1">
          69%
          <Caret />
        </button>
        <button aria-label="zoom out" className="ml-[10px] text-[#333]">
          <Icon name="minus" />
        </button>
        <label className="relative ml-[10px] flex h-4 w-[138px] items-center">
          <span className="h-px w-full bg-[#bbb]" />
          <span className="absolute left-0 h-px w-10 bg-[#666]" />
          <span className="absolute left-[69px] h-[7px] w-px bg-[#bbb]" />
          <span className="absolute left-[39px] size-3 rounded-full border border-[#444] bg-[#f4f4f4]" />
          <input type="range" min="0" max="100" defaultValue="33" aria-label="zoom" className="absolute inset-0 w-full opacity-0" />
        </label>
        <button aria-label="zoom in" className="ml-[9px] text-[#333]">
          <Icon name="plus" />
        </button>
        <button aria-label="fit" className="ml-[10px]">
          <Icon name="fit" />
        </button>
      </div>
    </footer>
  );
}

function Watermark() {
  return (
    <svg viewBox="0 0 380 190" className="absolute bottom-9 right-[94px] h-[190px] w-[380px]" aria-label="Baidu 经验">
      <g fill="#fdfdfe" stroke="#d6d8d9" strokeWidth="4" paintOrder="stroke" strokeLinejoin="round">
        <ellipse cx="145" cy="57" rx="14" ry="18" />
        <ellipse cx="170" cy="32" rx="13" ry="18" />
        <ellipse cx="202" cy="34" rx="14" ry="17" transform="rotate(10 202 34)" />
        <ellipse cx="222" cy="65" rx="14" ry="17" />
        <path d="M183 59q9 0 15 8 8 12 20 21 10 10 10 22-1 15-16 17-8 0-16-2-13-2-22 0-28 5-33-14-2-13 9-24 11-9 18-19 6-9 15-9z" />
        <text x="6" y="124" fontFamily="Liberation Sans" fontWeight="700" fontSize="82">Bai</text>
        <text x="152" y="115" fontFamily="Liberation Sans" fontSize="52" strokeWidth="5">du</text>
        <text x="239" y="120" fontFamily="Noto Sans CJK SC" fontWeight="900" fontSize="60">经验</text>
        <text x="12" y="172" fontFamily="Noto Sans" fontSize="41" strokeWidth="3">jingyan.baidu.com</text>
      </g>
    </svg>
  );
}

function EdgeMeter() {
  return (
    <div className="absolute right-0 top-[697px] flex h-[88px] w-[15px] justify-end rounded-l-md bg-[#454b5c] py-2 pr-[2px]">
      <svg viewBox="0 0 7 72" className="h-[72px] w-[7px]" aria-hidden="true">
        {Array.from({ length: 24 }, (_, i) => (
          <rect key={i} y={i * 3} width="7" height="2" fill={i < 8 ? '#2f3443' : i < 14 ? '#a3b45a' : i < 19 ? '#79b46c' : '#4fb39a'} />
        ))}
      </svg>
    </div>
  );
}

export default function App() {
  return (
    <div className="relative flex min-h-screen items-center justify-center bg-[#f7f8fa] pt-px font-['Noto_Sans','Noto_Sans_CJK_SC',sans-serif] text-xs">
      <main className="w-full max-w-[1366px] border border-[#e2e4e5] bg-[#f4f4f4] shadow-[0_0_6px_rgba(0,0,0,0.08)]">
        <TitleBar />
        <Ribbon />
        <div className="flex bg-[#e7e7e7]">
          <SlidePane />
          <div className="flex min-w-0 flex-1 flex-col">
            <div className="flex">
              <Canvas />
              <ScrollBar />
            </div>
            <div className="flex h-[31px] items-center gap-2 border-t border-[#d0d0d0] pl-2 text-[13px] text-[#444]">
              <Icon name="note" />
              单击此处添加备注
            </div>
          </div>
          <SideBar />
        </div>
        <StatusBar />
      </main>
      <Watermark />
      <EdgeMeter />
    </div>
  );
}
